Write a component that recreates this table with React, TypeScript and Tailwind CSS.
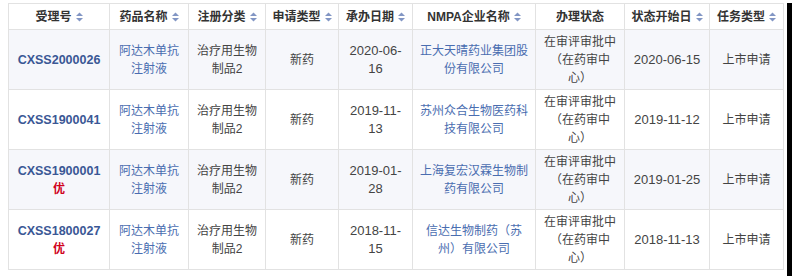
const cols = "grid-cols-[101px_79px_77px_73px_74px_123px_89px_85px_74px]"

type Row = {
  id: string
  priority?: boolean
  drug: string
  category: string
  kind: string
  date: string
  company: string
  status: string
  start: string
  task: string
}

const rows: Row[] = [
  {
    id: "CXSS2000026",
    drug: "阿达木单抗注射液",
    category: "治疗用生物制品2",
    kind: "新药",
    date: "2020-06-16",
    company: "正大天晴药业集团股份有限公司",
    status: "在审评审批中（在药审中心）",
    start: "2020-06-15",
    task: "上市申请",
  },
  {
    id: "CXSS1900041",
    drug: "阿达木单抗注射液",
    category: "治疗用生物制品2",
    kind: "新药",
    date: "2019-11-13",
    company: "苏州众合生物医药科技有限公司",
    status: "在审评审批中（在药审中心）",
    start: "2019-11-12",
    task: "上市申请",
  },
  {
    id: "CXSS1900001",
    priority: true,
    drug: "阿达木单抗注射液",
    category: "治疗用生物制品2",
    kind: "新药",
    date: "2019-01-28",
    company: "上海复宏汉霖生物制药有限公司",
    status: "在审评审批中（在药审中心）",
    start: "2019-01-25",
    task: "上市申请",
  },
  {
    id: "CXSS1800027",
    priority: true,
    drug: "阿达木单抗注射液",
    category: "治疗用生物制品2",
    kind: "新药",
    date: "2018-11-15",
    company: "信达生物制药（苏州）有限公司",
    status: "在审评审批中（在药审中心）",
    start: "2018-11-13",
    task: "上市申请",
  },
]

const headers: { label: string; sort: boolean }[] = [
  { label: "受理号", sort: true },
  { label: "药品名称", sort: true },
  { label: "注册分类", sort: true },
  { label: "申请类型", sort: true },
  { label: "承办日期", sort: true },
  { label: "NMPA企业名称", sort: true },
  { label: "办理状态", sort: false },
  { label: "状态开始日", sort: true },
  { label: "任务类型", sort: true },
]

const SortIcon = () => (
  <svg width="7" height="10" viewBox="0 0 7 10" className="mt-[1px] shrink-0 text-[#8296c4]">
    <path d="M0 4L3.5 0.5L7 4Z" fill="currentColor" />
    <path d="M0 6L3.5 9.5L7 6Z" fill="currentColor" />
  </svg>
)

const cell =
  "flex flex-col items-center justify-center border-r border-b border-[#e2e2e2] px-[6px] text-center leading-[18px] break-all"

const App = () => {
  return (
    <div className="flex h-[276px] w-[792px] bg-white font-['Liberation_Sans','Noto_Sans_CJK_SC',sans-serif]">
      <div className="ml-[8px] mt-[3px] w-[776px] self-start">
        <div className={`grid ${cols} border-t border-l border-[#e2e2e2]`}>
          {headers.map((h) => (
            <div
              key={h.label}
              className="flex h-[26px] items-center justify-center gap-[4px] border-r border-b border-[#e2e2e2] bg-white text-[12px] font-bold text-[#333]"
            >
              <span>{h.label}</span>
              {h.sort && <SortIcon />}
            </div>
          ))}
          {rows.map((r, i) => {
            const bg = i % 2 === 0 ? "bg-[#f6f7fb]" : "bg-white"
            return (
              <div key={r.id} className="contents">
                <div className={`${cell} ${bg} h-[60px]`}>
                  <span className="text-[12.5px] font-bold text-[#3a5795]">{r.id}</span>
                  {r.priority && (
                    <span className="text-[12px] font-bold text-[#d0021b]">优</span>
                  )}
                </div>
                <div className={`${cell} ${bg} text-[12px] text-[#4a6db0]`}>{r.drug}</div>
                <div className={`${cell} ${bg} text-[12px] text-[#444]`}>{r.category}</div>
                <div className={`${cell} ${bg} text-[12px] text-[#444]`}>{r.kind}</div>
                <div className={`${cell} ${bg} text-[13px] text-[#444]`}>
                  <span className="break-normal">{r.date}</span>
                </div>
                <div className={`${cell} ${bg} text-[12px] text-[#4a6db0]`}>{r.company}</div>
                <div className={`${cell} ${bg} text-[12px] text-[#444]`}>{r.status}</div>
                <div className={`${cell} ${bg} text-[13px] text-[#444]`}>{r.start}</div>
                <div className={`${cell} ${bg} text-[12px] text-[#444]`}>{r.task}</div>
              </div>
            )
          })}
        </div>
      </div>
      <div className="mt-[3px] ml-[3px] h-[273px] w-[5px] bg-black" />
    </div>
  )
}

export default App
